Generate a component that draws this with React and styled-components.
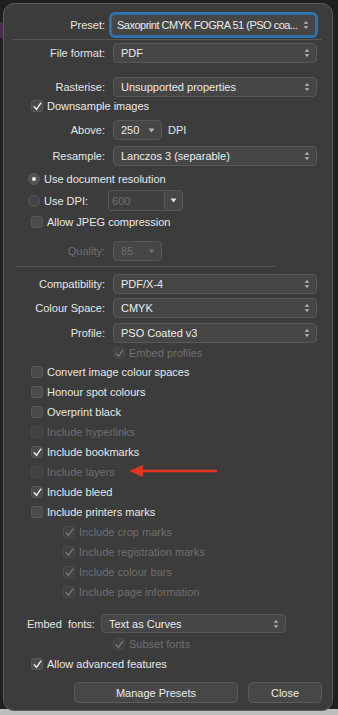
import React from 'react';
import styled, { createGlobalStyle } from 'styled-components';

const GlobalStyle = createGlobalStyle`
  html, body {
    margin: 0;
    padding: 0;
  }
  body {
    width: 338px;
    height: 715px;
    overflow: hidden;
    background: linear-gradient(to bottom, #1f1f21 0, #1f1f21 709px, #bdbdbd 709px);
    font-family: "Liberation Sans", Arial, sans-serif;
    -webkit-font-smoothing: antialiased;
  }
`;

const Backdrop = styled.div`
  position: relative;
  width: 338px;
  height: 715px;
  padding: 3px 0 0 3px;
  box-sizing: border-box;
`;

const EdgeStrip = styled.div`
  position: absolute;
  left: 0;
  top: 22px;
  width: 4px;
  height: 16px;
  background: #4a2a4e;
`;

const Dialog = styled.div`
  position: relative;
  width: 330px;
  height: 708px;
  box-sizing: border-box;
  background: #3c3c3c;
  border: 1px solid #5a5a5a;
  border-radius: 11px;
  padding: 10px 15px 0 0;
  display: flex;
  flex-direction: column;
  color: #e6e6e6;
  font-size: 11px;
`;

const FieldRow = styled.div`
  display: grid;
  grid-template-columns: 101px 1fr;
  column-gap: 8px;
  align-items: center;
  height: ${p => p.$h || 20}px;
  margin-top: ${p => p.$mt || 0}px;
`;

const Label = styled.span`
  text-align: right;
  color: ${p => (p.$disabled ? '#6f6f6f' : '#e6e6e6')};
  white-space: nowrap;
`;

const Field = styled.div`
  height: ${p => p.$h || 20}px;
  box-sizing: border-box;
  display: flex;
  align-items: center;
  justify-content: space-between;
  gap: 3px;
  padding: 0 6px 0 ${p => (p.$focus ? 5 : 7)}px;
  background: #464646;
  border: 1px solid ${p => (p.$focus ? '#2c6fa8' : '#575757')};
  border-radius: 4px;
  box-shadow: ${p => (p.$focus ? '0 0 0 2px #2f72ad' : 'none')};
  color: ${p => (p.$disabled ? '#6f6f6f' : '#ececec')};
  width: ${p => (p.$w ? `${p.$w}px` : 'auto')};
  margin: ${p => p.$margin || 0};
  white-space: nowrap;
  overflow: hidden;
  min-width: 0;
`;

const Value = styled.span`
  overflow: hidden;
  min-width: 0;
  letter-spacing: ${p => (p.$tight ? '-0.5px' : 'normal')};
`;

const Inline = styled.div`
  display: flex;
  align-items: center;
  gap: 6px;
`;

const Divider = styled.div`
  height: 1px;
  background: #565656;
  margin: ${p => p.$margin};
`;

const CheckRow = styled.div`
  position: relative;
  display: flex;
  align-items: center;
  gap: 4px;
  height: ${p => p.$h || 16}px;
  margin-top: ${p => p.$mt || 0}px;
  padding-left: ${p => p.$indent}px;
  color: ${p => (p.$disabled ? '#6f6f6f' : '#e9e9e9')};
  white-space: nowrap;
`;

const Box = styled.span`
  width: 12px;
  height: 12px;
  box-sizing: border-box;
  border-radius: 3px;
  background: ${p => (p.$disabled ? '#424242' : '#4b4b4b')};
  border: 1px solid ${p => (p.$disabled ? '#4a4a4a' : '#585858')};
  display: flex;
  align-items: center;
  justify-content: center;
  flex-shrink: 0;
`;

const Radio = styled.span`
  width: 12px;
  height: 12px;
  box-sizing: border-box;
  border-radius: 50%;
  background: ${p => (p.$on ? '#535353' : '#444')};
  border: 1px solid #585858;
  display: flex;
  align-items: center;
  justify-content: center;
  flex-shrink: 0;
  &::after {
    content: '';
    width: 4px;
    height: 4px;
    border-radius: 50%;
    background: ${p => (p.$on ? '#f0f0f0' : 'transparent')};
  }
`;

const DpiField = styled.div`
  display: flex;
  height: 21px;
  width: 75px;
  box-sizing: border-box;
  border: 1px solid #575757;
  border-radius: 3px;
  background: #3f3f3f;
  margin-left: 16px;
  overflow: hidden;
`;

const DpiValue = styled.span`
  flex: 1;
  display: flex;
  align-items: center;
  padding-left: 3px;
  color: #6f6f6f;
`;

const DpiArrow = styled.span`
  width: 17px;
  border-left: 1px solid #575757;
  background: #464646;
  display: flex;
  align-items: center;
  justify-content: center;
`;

const FontsRow = styled.div`
  display: flex;
  align-items: center;
  height: 19px;
  margin-top: ${p => p.$mt}px;
  padding-left: 23px;
  gap: 6px;
  white-space: nowrap;
`;

const ButtonRow = styled.div`
  display: flex;
  justify-content: flex-end;
  gap: 10px;
  margin-top: ${p => p.$mt}px;
  margin-right: -5px;
`;

const Button = styled.div`
  width: ${p => p.$w}px;
  height: 21px;
  box-sizing: border-box;
  display: flex;
  align-items: center;
  justify-content: center;
  background: #474747;
  border: 1px solid #5b5b5b;
  border-radius: 5px;
  color: #ececec;
`;

const Arrow = styled.svg`
  position: absolute;
  left: 124px;
  top: 1px;
`;

const Check = ({ disabled }) => (
  <svg width="9" height="9" viewBox="0 0 9 9">
    <path d="M1.2 4.8 L3.5 7.4 L7.8 1.2" fill="none" stroke={disabled ? '#777' : '#f2f2f2'} strokeWidth="1.4" strokeLinecap="round" strokeLinejoin="round" />
  </svg>
);

const Stepper = () => (
  <svg width="6" height="10" viewBox="0 0 6 10" style={{ flexShrink: 0 }}>
    <path d="M3 1 L5.3 3.8 H0.7 Z M3 9 L5.3 6.2 H0.7 Z" fill="#b8b8b8" />
  </svg>
);

const Caret = ({ color = '#b8b8b8' }) => (
  <svg width="7" height="5" viewBox="0 0 7 5">
    <path d="M0.5 0.5 H6.5 L3.5 4.5 Z" fill={color} />
  </svg>
);

const CheckItem = ({ label, checked, disabled, indent = 27, mt, h = 20, children }) => (
  <CheckRow $indent={indent} $disabled={disabled} $mt={mt} $h={h}>
    <Box $disabled={disabled}>{checked && <Check disabled={disabled} />}</Box>
    <span>{label}</span>
    {children}
  </CheckRow>
);

const SelectRow = ({ label, value, mt, disabled }) => (
  <FieldRow $mt={mt}>
    <Label $disabled={disabled}>{label}</Label>
    <Field $disabled={disabled}>
      <Value>{value}</Value>
      <Stepper />
    </Field>
  </FieldRow>
);

const mainChecks = [
  { label: 'Convert image colour spaces' },
  { label: 'Honour spot colours' },
  { label: 'Overprint black' },
  { label: 'Include hyperlinks', disabled: true },
  { label: 'Include bookmarks', checked: true },
  { label: 'Include layers', disabled: true, arrow: true },
  { label: 'Include bleed', checked: true },
  { label: 'Include printers marks' },
];

const markChecks = [
  'Include crop marks',
  'Include registration marks',
  'Include colour bars',
  'Include page information',
];

export default function App() {
  return (
    <>
      <GlobalStyle />
      <Backdrop>
        <EdgeStrip />
        <Dialog>
          <FieldRow $h={22}>
            <Label>Preset:</Label>
            <Field $focus $h={22} $margin="0 1px 0 -2px">
              <Value $tight>Saxoprint CMYK FOGRA 51 (PSO coa...</Value>
              <Stepper />
            </Field>
          </FieldRow>
          <Divider $margin="3px -5px 0 9px" />
          <SelectRow label="File format:" value="PDF" mt={3} />
          <SelectRow label="Rasterise:" value="Unsupported properties" mt={14} />
          <CheckItem label="Downsample images" checked mt={1} h={16} />
          <FieldRow $mt={6}>
            <Label>Above:</Label>
            <Inline>
              <Field $w={49}>
                <span>250</span>
                <Caret />
              </Field>
              <span>DPI</span>
            </Inline>
          </FieldRow>
          <SelectRow label="Resample:" value="Lanczos 3 (separable)" mt={6} />
          <CheckRow $indent={24} $mt={5} $h={16}>
            <Radio $on />
            <span>Use document resolution</span>
          </CheckRow>
          <CheckRow $indent={24} $mt={3} $h={21}>
            <Radio />
            <span>Use DPI:</span>
            <DpiField>
              <DpiValue>600</DpiValue>
              <DpiArrow>
                <Caret color="#e0e0e0" />
              </DpiArrow>
            </DpiField>
          </CheckRow>
          <CheckItem label="Allow JPEG compression" mt={3} h={16} />
          <FieldRow $mt={11}>
            <Label $disabled>Quality:</Label>
            <Field $w={49} $disabled>
              <span>85</span>
              <Caret color="#6f6f6f" />
            </Field>
          </FieldRow>
          <Divider $margin="5px 40px 0 12px" />
          <SelectRow label="Compatibility:" value="PDF/X-4" mt={7} />
          <SelectRow label="Colour Space:" value="CMYK" mt={4} />
          <SelectRow label="Profile:" value="PSO Coated v3" mt={5} />
          <CheckItem label="Embed profiles" checked disabled indent={109} mt={2} h={16} />
          {mainChecks.map((c, i) => (
            <CheckItem key={c.label} label={c.label} checked={c.checked} disabled={c.disabled} mt={i === 0 ? 1 : 0}>
              {c.arrow && (
                <Arrow width="90" height="16" viewBox="0 0 90 16">
                  <path d="M14 8 H88" stroke="#e2351f" strokeWidth="2.4" strokeLinecap="round" />
                  <path d="M1 8 L15 2 L15 14 Z" fill="#e2351f" />
                </Arrow>
              )}
            </CheckItem>
          ))}
          {markChecks.map(label => (
            <CheckItem key={label} label={label} checked disabled indent={59} />
          ))}
          <FontsRow $mt={12}>
            <span>Embed&nbsp; fonts:</span>
            <Field $w={185} $h={19}>
              <Value>Text as Curves</Value>
              <Stepper />
            </Field>
          </FontsRow>
          <CheckItem label="Subset fonts" checked disabled indent={109} mt={3} h={16} />
          <CheckItem label="Allow advanced features" checked mt={4} h={16} />
          <ButtonRow $mt={10}>
            <Button $w={164}>Manage Presets</Button>
            <Button $w={74}>Close</Button>
          </ButtonRow>
        </Dialog>
      </Backdrop>
    </>
  );
}
